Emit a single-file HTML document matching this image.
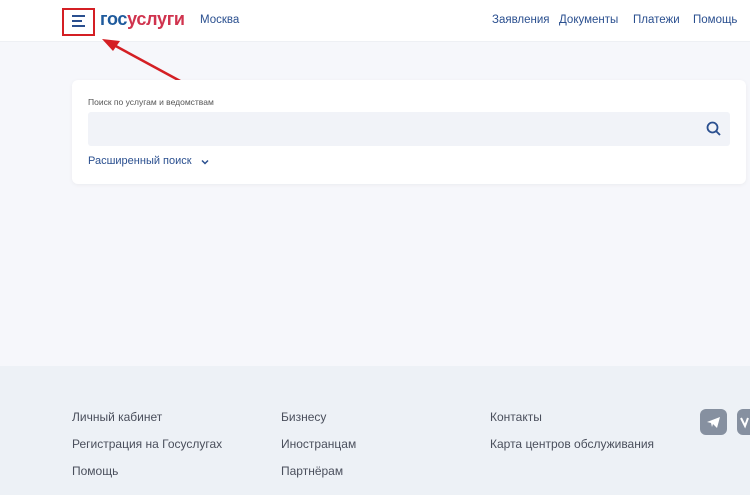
<!DOCTYPE html>
<html><head><meta charset="utf-8"><style>
*{margin:0;padding:0;box-sizing:border-box}
body{width:750px;height:495px;overflow:hidden;background:#f6f7fb;font-family:"Liberation Sans",sans-serif;position:relative}
.hdr{position:absolute;left:0;top:0;width:750px;height:42px;background:#fff;border-bottom:1px solid #eef0f4}
.a{position:absolute;font-size:11.5px;color:#2a4f8f;white-space:nowrap}
.card{position:absolute;left:72px;top:80px;width:674px;height:104px;background:#fff;border-radius:6px;box-shadow:0 1px 4px rgba(0,0,0,.05)}
.inp{position:absolute;left:16px;top:32px;width:642px;height:34px;background:#f1f3f8;border-radius:3px}
.ft{position:absolute;left:0;top:366px;width:750px;height:129px;background:#edf1f6}
.f{position:absolute;font-size:12px;color:#4a4f5c;white-space:nowrap}
</style></head><body>
<div class="hdr">
<div style="position:absolute;left:62px;top:8px;width:33px;height:28px;border:2px solid #d41f24"></div>
<div style="position:absolute;left:72px;top:15px;width:13px;height:2px;background:#2a4f8f"></div>
<div style="position:absolute;left:72px;top:20px;width:10px;height:2px;background:#2a4f8f"></div>
<div style="position:absolute;left:72px;top:25px;width:13px;height:2px;background:#2a4f8f"></div>
<div style="position:absolute;left:100px;top:9px;font-size:18px;font-weight:bold;letter-spacing:-0.3px"><span style="color:#1e5a9c">гос</span><span style="color:#d0334e">услуги</span></div>
<div class="a" style="left:200px;top:14px">Москва</div>
<div class="a" style="left:492px;top:14px">Заявления</div>
<div class="a" style="left:559px;top:14px">Документы</div>
<div class="a" style="left:633px;top:14px">Платежи</div>
<div class="a" style="left:693px;top:14px">Помощь</div>
</div>
<svg style="position:absolute;left:0;top:0" width="750" height="100"><line x1="182" y1="82" x2="112" y2="44" stroke="#d41f24" stroke-width="2.5"/><polygon points="102,39 120,41 113,51" fill="#d41f24"/></svg>
<div class="card">
<div style="position:absolute;left:16px;top:17px;font-size:8.5px;color:#555">Поиск по услугам и ведомствам</div>
<div class="inp"><svg style="position:absolute;right:9px;top:9px" width="15" height="15"><circle cx="6.5" cy="6.5" r="5" fill="none" stroke="#2a4f8f" stroke-width="1.8"/><line x1="10" y1="10" x2="14" y2="14" stroke="#2a4f8f" stroke-width="1.9"/></svg></div>
<div style="position:absolute;left:16px;top:75px;font-size:11px;color:#2a4f8f">Расширенный поиск</div>
<svg style="position:absolute;left:129px;top:79px" width="8" height="6"><path d="M1 1.5L4 4.5L7 1.5" fill="none" stroke="#2a4f8f" stroke-width="1.5"/></svg>
</div>
<div class="ft">
<div class="f" style="left:72px;top:44px">Личный кабинет</div>
<div class="f" style="left:72px;top:71px">Регистрация на Госуслугах</div>
<div class="f" style="left:72px;top:98px">Помощь</div>
<div class="f" style="left:281px;top:44px">Бизнесу</div>
<div class="f" style="left:281px;top:71px">Иностранцам</div>
<div class="f" style="left:281px;top:98px">Партнёрам</div>
<div class="f" style="left:490px;top:44px">Контакты</div>
<div class="f" style="left:490px;top:71px">Карта центров обслуживания</div>
<div style="position:absolute;left:700px;top:43px;width:27px;height:26px;background:#8690a0;border-radius:6px"><svg width="27" height="26"><path d="M7 13L20 8L17 19L13 15L12 18L11 14Z" fill="#fff"/></svg></div>
<div style="position:absolute;left:737px;top:43px;width:27px;height:26px;background:#8690a0;border-radius:6px"><svg width="27" height="26"><path d="M4 9L8 17L11 9" fill="none" stroke="#fff" stroke-width="2"/></svg></div>
</div>
</body></html>
